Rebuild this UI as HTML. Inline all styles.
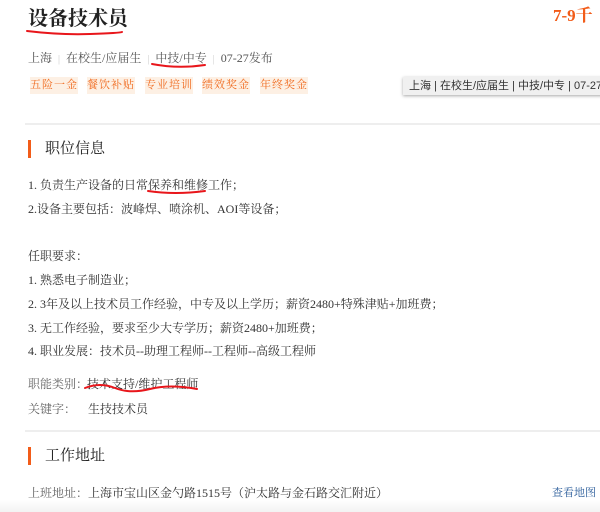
<!DOCTYPE html>
<html><head><meta charset="utf-8"><style>
*{margin:0;padding:0}
body{width:600px;height:512px;background:#fff;position:relative;overflow:hidden;font-family:"Liberation Serif","Noto Serif CJK SC",serif;color:#333}
.a{position:absolute;white-space:nowrap}
.t{font-size:12px;line-height:16px}
.tag{position:absolute;top:77px;width:48px;height:17px;line-height:17px;font-size:11px;letter-spacing:1px;text-align:center;color:#f06a1e;background:#fdf0e4}
.bar{position:absolute;left:28px;width:3px;background:#f25c19}
.hd{font-size:15px;line-height:20px;color:#222}
.sep{color:#ccc;margin:0 6px;font-size:10px}
</style></head><body>
<div class="a" style="left:28px;top:6px;font-size:20px;line-height:26px;color:#222;font-weight:bold">设备技术员</div>
<div class="a" style="left:553px;top:6px;font-size:17px;line-height:20px;color:#f25c19;font-weight:bold">7-9千</div>
<div class="a t" style="left:28px;top:50px;color:#555">上海<span class="sep">|</span>在校生/应届生<span class="sep">|</span>中技/中专<span class="sep">|</span>07-27发布</div>
<div class="tag" style="left:30px">五险一金</div>
<div class="tag" style="left:87px">餐饮补贴</div>
<div class="tag" style="left:145px">专业培训</div>
<div class="tag" style="left:202px">绩效奖金</div>
<div class="tag" style="left:260px">年终奖金</div>
<div class="a" style="left:403px;top:77px;width:200px;height:18px;background:#f0f0f0;box-shadow:0 1px 3px rgba(0,0,0,.35);font-family:'Liberation Sans','Noto Sans CJK SC',sans-serif;font-size:11px;line-height:18px;color:#333;padding-left:6px">上海 | 在校生/应届生 | 中技/中专 | 07-27</div>
<div class="a" style="left:25px;top:123px;width:575px;height:2px;background:#eee"></div>
<div class="bar" style="top:140px;height:18px"></div>
<div class="a hd" style="left:45px;top:139px">职位信息</div>
<div class="a t" style="left:28px;top:177px">1. 负责生产设备的日常保养和维修工作；</div>
<div class="a t" style="left:28px;top:201px">2.设备主要包括：波峰焊、喷涂机、AOI等设备；</div>
<div class="a t" style="left:28px;top:248px">任职要求：</div>
<div class="a t" style="left:28px;top:272px">1. 熟悉电子制造业；</div>
<div class="a t" style="left:28px;top:296px">2. 3年及以上技术员工作经验，中专及以上学历；薪资2480+特殊津贴+加班费；</div>
<div class="a t" style="left:28px;top:320px">3. 无工作经验，要求至少大专学历；薪资2480+加班费；</div>
<div class="a t" style="left:28px;top:343px">4. 职业发展：技术员--助理工程师--工程师--高级工程师</div>
<div class="a t" style="left:28px;top:376px;color:#666">职能类别：</div>
<div class="a t" style="left:87px;top:376px">技术支持/维护工程师</div>
<div class="a t" style="left:28px;top:401px;color:#666">关键字：</div>
<div class="a t" style="left:88px;top:401px">生技技术员</div>
<div class="a" style="left:25px;top:430px;width:575px;height:2px;background:#eee"></div>
<div class="bar" style="top:447px;height:18px"></div>
<div class="a hd" style="left:45px;top:446px">工作地址</div>
<div class="a t" style="left:28px;top:485px;color:#666">上班地址：</div>
<div class="a t" style="left:88px;top:485px">上海市宝山区金勺路1515号（沪太路与金石路交汇附近）</div>
<div class="a" style="left:552px;top:486px;font-size:11px;line-height:14px;color:#2a5c9a">查看地图</div>
<div class="a" style="left:0;top:500px;width:600px;height:12px;background:linear-gradient(#fff,#f3f3f3)"></div>
<svg class="a" style="left:0;top:0" width="600" height="512">
<g fill="none" stroke="#e8161b" stroke-width="2" stroke-linecap="round">
<path d="M27 31 Q60 35 90 34 T122 32"/>
<path d="M152 64 Q178 69 205 65"/>
<path d="M148 191 Q175 195 205 191"/>
<path d="M85 388 Q100 382 115 388 T150 389 T197 389"/>
</g></svg>
</body></html>
